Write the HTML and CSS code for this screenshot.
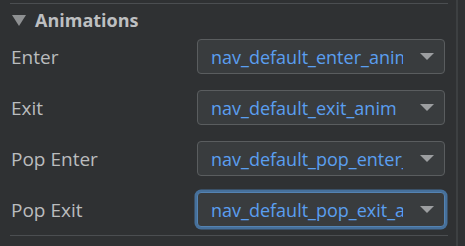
FILE: index.html
```html
<!DOCTYPE html>
<html lang="en">
<head>
    <meta charset="UTF-8">
    <title>Animations</title>
    <link rel="stylesheet" href="styles.css">
</head>
<body>
    <div class="panel">
        <div class="section">
            <div class="section-title">
                <span class="caret"></span>
                <span>Animations</span>
            </div>
            <div class="fields">
                <label class="label">Enter</label>
                <div class="combo"><span class="combo-text">nav_default_enter_anim</span><span class="arrow"></span></div>

                <label class="label">Exit</label>
                <div class="combo"><span class="combo-text">nav_default_exit_anim</span><span class="arrow"></span></div>

                <label class="label">Pop Enter</label>
                <div class="combo"><span class="combo-text">nav_default_pop_enter_anim</span><span class="arrow"></span></div>

                <label class="label">Pop Exit</label>
                <div class="combo focused"><span class="combo-text">nav_default_pop_exit_anim</span><span class="arrow"></span></div>
            </div>
        </div>
        <div class="section next"></div>
    </div>
    <div class="divider"></div>
</body>
</html>
```
FILE: styles.css
```css
body {
    margin: 0;
    height: 246px;
    overflow: hidden;
    display: flex;
    background-color: #2f3133;
    font-family: "Open Sans", "Noto Sans", sans-serif;
    color: #babcbe;
}

.panel {
    width: 456px;
    padding-top: 3px;
}

.divider {
    width: 2px;
    background-color: #3d4042;
}

.section {
    margin: 0 8px 0 10px;
    border-top: 1px solid #4b4e51;
}

.section-title {
    display: flex;
    align-items: center;
    height: 31px;
    font-size: 18px;
    font-weight: bold;
    color: #bdbfc1;
}

.caret {
    width: 0;
    height: 0;
    margin: 1px 9px 0 2px;
    border-left: 7px solid transparent;
    border-right: 7px solid transparent;
    border-top: 11px solid #8e9092;
}

.fields {
    display: grid;
    grid-template-columns: 186px 248px;
    row-gap: 16px;
    align-items: center;
    margin-top: 4px;
    padding-left: 1px;
}

.label {
    font-size: 19px;
}

.combo {
    display: flex;
    align-items: center;
    height: 35px;
    box-sizing: border-box;
    border: 1px solid #5a5d5f;
    border-radius: 4px;
    background-color: #393c3e;
}

.combo-text {
    width: 192px;
    margin-left: 13px;
    overflow: hidden;
    white-space: nowrap;
    font-size: 18px;
    color: #5b9ff0;
}

.arrow {
    width: 0;
    height: 0;
    margin-left: 17px;
    border-left: 7px solid transparent;
    border-right: 7px solid transparent;
    border-top: 7px solid #9c9ea0;
}

.focused {
    border-color: #5483b2;
    box-shadow: 0 0 0 2.5px #46709b;
}

.next {
    margin-top: 8px;
    height: 10px;
}
```
